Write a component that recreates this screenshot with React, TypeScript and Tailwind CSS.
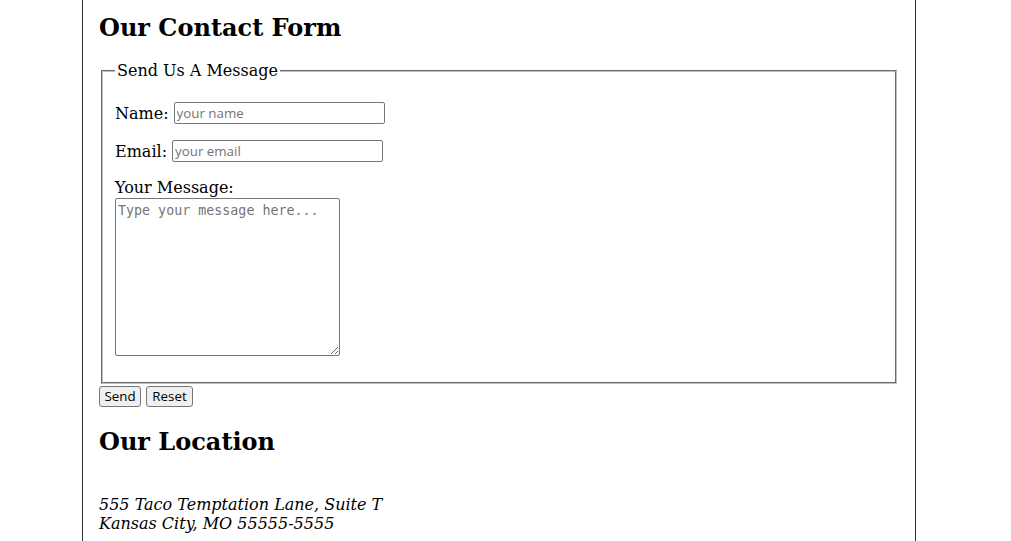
import React from 'react';

const inputCls =
  "h-[22px] w-[211px] rounded-[2px] border border-[#767676] bg-white px-[2px] py-[1px] font-['Open_Sans',sans-serif] text-[13.33px] text-black placeholder:text-[#757575] outline-none";

const btnCls =
  "h-[21px] rounded-[3px] border border-[#767676] bg-[#efefef] font-['Open_Sans',sans-serif] text-[13.33px] leading-[19px] text-black";

export default function App() {
  return (
    <div className="min-h-screen bg-white font-['DejaVu_Serif',serif] text-black">
      <div className="ml-[82px] min-h-[541px] w-[834px] border-x border-[#333333] px-4 pt-[14px]">
        <h2 className="text-2xl leading-[28px] font-bold">Our Contact Form</h2>

        <form onSubmit={(e) => e.preventDefault()}>
          <fieldset className="mx-0.5 mt-[19px] border-2 border-[#c0c0c0] [border-style:groove] px-3 pb-[26px]">
            <legend className="px-0.5 text-base leading-[19px]">Send Us A Message</legend>

            <div className="mt-[22px] flex h-[22px] items-center gap-[5px] text-base leading-[19px]">
              <label htmlFor="name">Name:</label>
              <input id="name" type="text" placeholder="your name" className={inputCls} />
            </div>

            <div className="mt-4 flex h-[22px] items-center gap-[5px] text-base leading-[19px]">
              <label htmlFor="email">Email:</label>
              <input id="email" type="email" placeholder="your email" className={inputCls} />
            </div>

            <div className="mt-4 flex flex-col items-start">
              <label htmlFor="msg" className="text-base leading-[19px]">Your Message:</label>
              <textarea
                id="msg"
                placeholder="Type your message here..."
                className="mt-px h-[158px] w-[225px] rounded-[2px] border border-[#767676] bg-white px-[2px] pt-[4px] pb-[2px] font-['DejaVu_Sans_Mono',monospace] text-[13.33px] leading-[16px] placeholder:text-[#757575] outline-none"
              />
            </div>
          </fieldset>

          <div className="mt-[2px] flex gap-[5px]">
            <button type="submit" className={`${btnCls} w-[42px]`}>Send</button>
            <button type="reset" className={`${btnCls} w-[47px]`}>Reset</button>
          </div>
        </form>

        <h2 className="mt-[21px] text-2xl leading-[28px] font-bold">Our Location</h2>

        <address className="mt-[39px] text-base leading-[19px] italic">
          555 Taco Temptation Lane, Suite T
          <br />
          Kansas City, MO 55555-5555
        </address>
      </div>
    </div>
  );
}
